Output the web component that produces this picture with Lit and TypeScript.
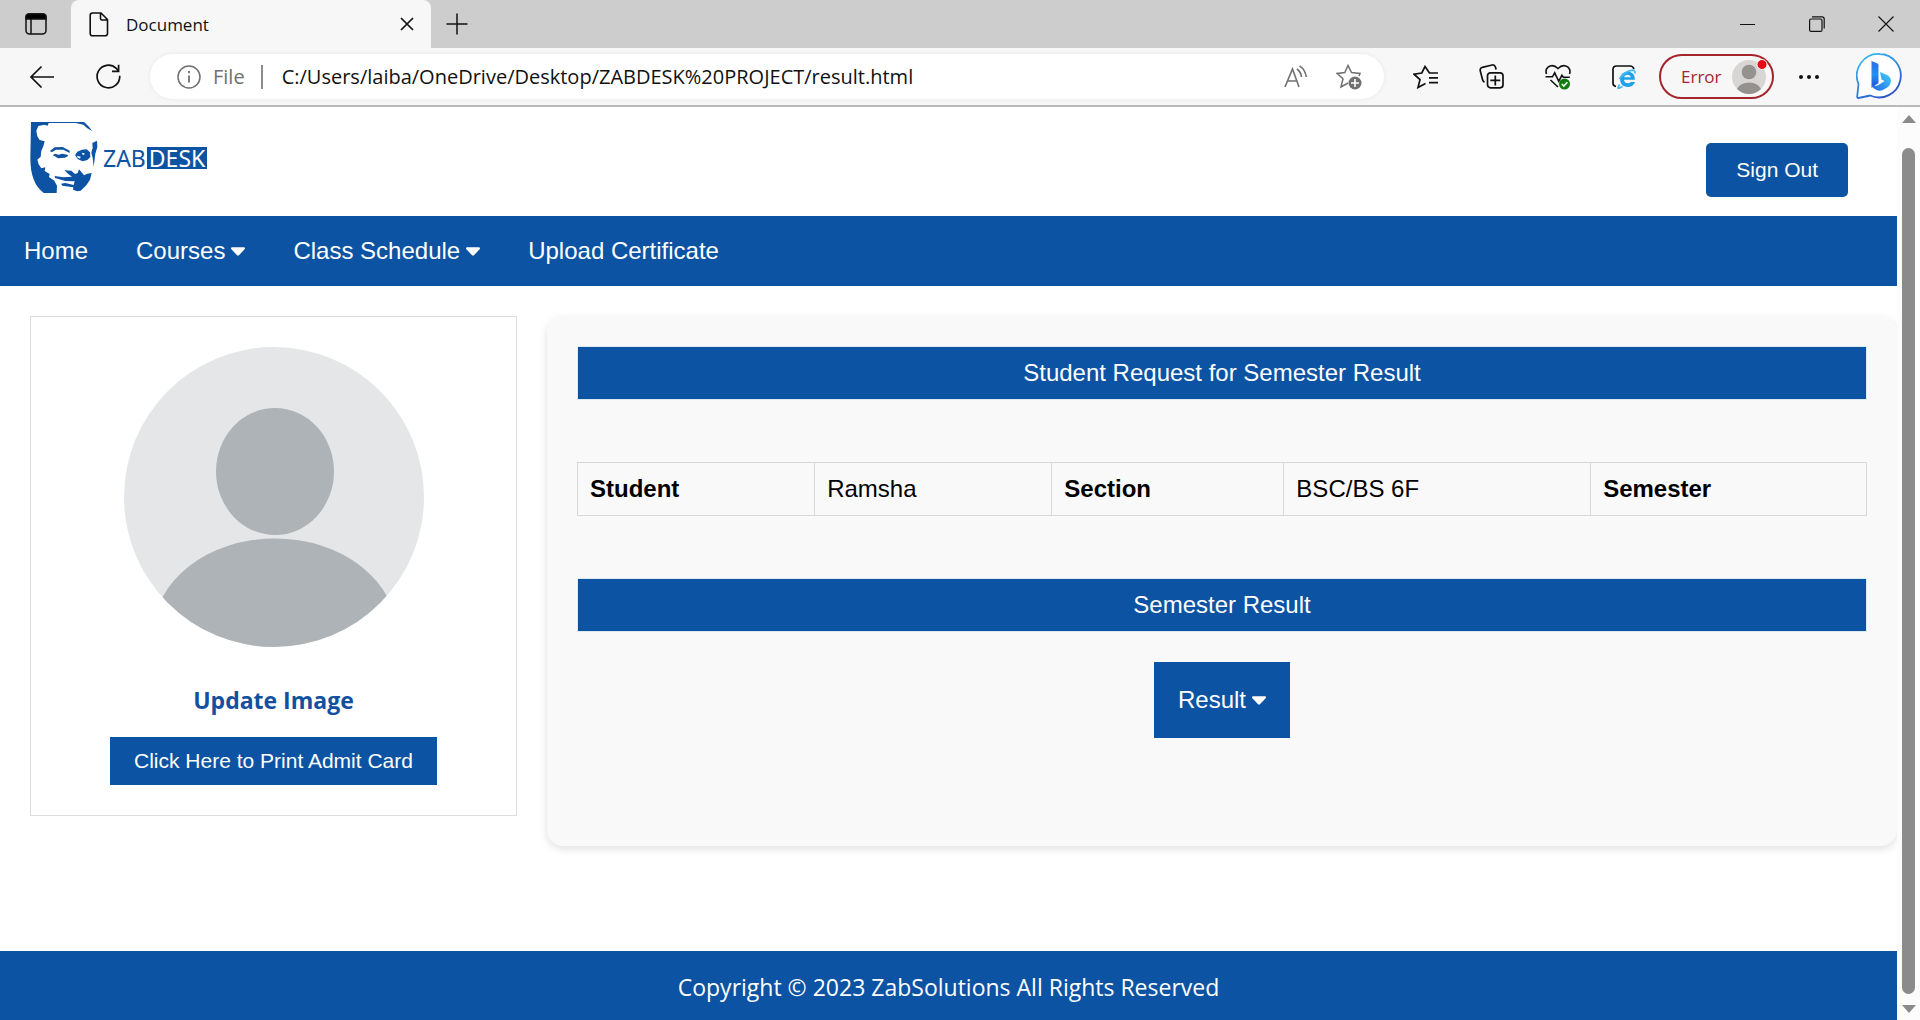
import { LitElement, html, css } from "lit";
import { customElement } from "lit/decorators.js";

const caret = html`<svg class="caret" viewBox="0 0 15 9" width="14" height="9" aria-hidden="true"><path d="M1.400 0h12.200c1.200 0 1.800 1.300 1 2.100L8.500 8.500a1.400 1.400 0 0 1-2 0L.4 2.100C-.4 1.300.200 0 1.400 0z" fill="currentColor"/></svg>`;

@customElement("browser-bar")
export class BrowserBar extends LitElement {
  static styles = css`
    :host { display: block; font-family: "Open Sans", "Noto Sans", sans-serif; color: #111; }
    * { box-sizing: border-box; }
    svg { display: block; flex: none; fill: none; stroke: currentColor; }
    svg.solid { fill: currentColor; stroke: none; }
    button { border: 0; padding: 0; background: none; color: inherit; font: inherit; display: flex; align-items: center; justify-content: center; }
    .tabs { display: flex; height: 48px; background: #cdcdcd; }
    .workspace { width: 71px; }
    .tab { display: flex; align-items: center; width: 360px; padding: 0 16px 0 18px; background: #f7f7f7; border-radius: 8px 8px 0 0; font-size: 17px; }
    .title { flex: 1; margin-left: 17px; }
    .add { width: 52px; }
    .spacer { flex: 1; }
    .win { width: 69px; }
    .tools { display: flex; align-items: center; height: 59px; padding: 0 18px 0 29px; background: #f7f7f7; border-bottom: 2px solid #b9b9b9; }
    .reload { margin-left: 41px; }
    .address { display: flex; align-items: center; flex: 1; height: 45px; margin: 0 29px; padding: 0 21px 0 27px; border-radius: 23px; background: #fff; box-shadow: 0 0 4px #e6e6e6; font-size: 20px; color: #707070; }
    .scheme { margin-left: 12px; }
    .bar { width: 2px; height: 24px; margin: 0 19px 0 16px; background: #8c8c8c; }
    .url { flex: 1; min-width: 0; border: 0; outline: 0; padding: 0; font: inherit; color: #111; background: none; }
    .star { margin-left: 28px; }
    .actions { display: flex; align-items: center; gap: 41px; }
    .profile { width: 115px; height: 45px; margin: 0 23px; padding: 0 4px 0 20px; border: 2px solid #a4262c; border-radius: 23px; color: #a4262c; font-size: 17px; justify-content: space-between; }
    .bing { margin-left: 35px; }
  `;

  render() {
    return html`
      <div class="tabs">
        <button class="workspace" aria-label="Tab actions">
          <svg width="22" height="22" viewBox="0 0 22 22" stroke-width="1.500"><rect x="1" y="1" width="20" height="20" rx="3.500"/><path d="M1 6V4q0-3 3-3h14q3 0 3 3v2z" fill="#000"/><path d="M6 6v15"/></svg>
        </button>
        <div class="tab">
          <svg width="20" height="25" viewBox="0 0 20 25" stroke-width="1.600"><path d="M3.500 1H12l6.500 6.500v14a2.300 2.300 0 0 1-2.300 2.300H3.500a2.300 2.300 0 0 1-2.300-2.300V3.300A2.300 2.300 0 0 1 3.500 1zM11.500 1v5.500a1.500 1.500 0 0 0 1.500 1.500h5.500"/></svg>
          <span class="title">Document</span>
          <button aria-label="Close tab"><svg width="16" height="14" viewBox="0 0 16 14" stroke-width="1.700"><path d="m2 1 12 12M14 1 2 13"/></svg></button>
        </div>
        <button class="add" aria-label="New tab"><svg width="22" height="22" viewBox="0 0 22 22" stroke-width="1.500"><path d="M11 0.500v21M0.500 11h21"/></svg></button>
        <span class="spacer"></span>
        <button class="win" aria-label="Minimize"><svg width="15" height="15" viewBox="0 0 15 15"><path d="M0 7.500h15"/></svg></button>
        <button class="win" aria-label="Restore"><svg width="16" height="16" viewBox="0 0 16 16" stroke-width="1.200"><rect x=".6" y="3" width="12.400" height="12.400" rx="1.500"/><path d="M3 .8h10a2.200 2.200 0 0 1 2.200 2.200v9.500"/></svg></button>
        <button class="win" aria-label="Close window"><svg width="16" height="16" viewBox="0 0 16 16" stroke-width="1.100"><path d="m.5.5 15 15m0-15-15 15"/></svg></button>
      </div>
      <div class="tools">
        <button aria-label="Back"><svg width="26" height="24" viewBox="0 0 26 24" stroke-width="1.700"><path d="M25 12H2M12.500 1.500 2 12l10.500 10.500"/></svg></button>
        <button class="reload" aria-label="Refresh"><svg width="25" height="25" viewBox="0 0 25 25" stroke-width="1.700"><path d="M23.700 11.800A11.300 11.300 0 1 1 20.200 4.300L22.500 7M22.600 .8V7.400H16"/></svg></button>
        <div class="address">
          <svg width="24" height="24" viewBox="0 0 24 24" stroke-width="1.500"><circle cx="12" cy="12" r="11"/><path d="M12 10.500v7M12 6v2.200" stroke-width="1.800"/></svg>
          <span class="scheme">File</span><span class="bar"></span>
          <input class="url" aria-label="Address" .value=${"C:/Users/laiba/OneDrive/Desktop/ZABDESK%20PROJECT/result.html"} />
          <button aria-label="Read aloud"><svg width="24" height="24" viewBox="0 0 24 24" stroke-width="1.600"><path d="m1 22 7.500-18L15 22M3.700 16h8.800M13 4q4 3 4.500 8M15.500 .8q6 4 6.800 11.200"/></svg></button>
          <button class="star" aria-label="Add to favorites"><svg width="27" height="26" viewBox="0 0 27 26" stroke-width="1.500"><path d="M23 12l1-2.500-8.500-1L12 1.500 8.800 8.500 1 9.500 7 14.800 5 23l7-4"/><circle cx="19" cy="19" r="6.500" fill="#707070" stroke="none"/><path d="M19 15v8M15 19h8" stroke="#fff" stroke-width="1.600"/></svg></button>
        </div>
        <div class="actions">
          <button aria-label="Favorites"><svg width="25" height="24" viewBox="0 0 25 24" stroke-width="1.700"><path d="M16.500 8 12 1.500 8.800 8 1 9.200 7 14.600 5 22.500l7.500-4M16 8h9M16 12.800h9M16 17.600h9"/></svg></button>
          <button aria-label="Collections"><svg width="25" height="25" viewBox="0 0 25 25" stroke-width="1.700"><rect x="8.500" y="8.800" width="15.500" height="15" rx="3"/><path d="M16.300 11.500v10M11.300 16.400h10M5.500 18.200Q4 17.500 3.600 15.800L1.200 6.600Q.8 4 3.300 3.300L13.200 1q2.500-.3 3.200 2l.7 2.500"/></svg></button>
          <button aria-label="Browser essentials"><svg width="26" height="26" viewBox="0 0 26 26" stroke-width="1.600"><path d="M1.500 10Q0 6 3 3.200 8-.5 13 4.500q5-5 10-1.300Q26 6 24.500 10M.5 12.800h7l2.200-4 4 8.500 3.200-6 1.400 2h6.500M5.500 16l7.500 7"/><circle cx="19.500" cy="20" r="5.500" fill="#107c10" stroke="none"/><path d="m16.800 20 2 2 3.600-3.800" stroke="#fff"/></svg></button>
          <button aria-label="Internet Explorer mode"><svg width="24" height="24" viewBox="0 0 24 24"><path d="M4 21.500Q1 21 1 18V4.500Q1 1 4.500 1H18q3 0 4 3" stroke-width="1.700"/><path d="M23 14.800H12q.5 3.500 3.800 3.500 2.200 0 3-1.300H23Q21.200 22 15.600 22 8 21.500 8 14q.5-7 7.500-7.500 7.500.5 7.500 8.300zM12 12.200h6.800Q18.500 9.800 15.500 9.700T12 12.200z" fill="#1fa2e8" fill-rule="evenodd" stroke="none"/><path d="M7.500 19.500Q4.500 24.500 7.500 23l3-1.500M7.500 14Q13.500 5.500 21 5.200q2.500.3 1.800 3.300" stroke="#45b8f2" stroke-width="1.700"/></svg></button>
        </div>
        <button class="profile" aria-label="Profile error">Error
          <svg class="solid" width="36" height="36" viewBox="0 0 36 36"><circle cx="17" cy="18" r="17" fill="#d8d6d4"/><circle cx="17" cy="13" r="7.300" fill="#94918f"/><path d="M5 30a12.500 9 0 0 1 24 0 17 17 0 0 1-24 0z" fill="#94918f"/><circle cx="30" cy="5.500" r="5" fill="#e60b14" stroke="#f7f7f7" stroke-width="1"/></svg>
        </button>
        <button aria-label="Settings and more"><svg class="solid" width="24" height="6" viewBox="0 0 24 6"><circle cx="4" cy="3" r="2"/><circle cx="12" cy="3" r="2"/><circle cx="20" cy="3" r="2"/></svg></button>
        <button class="bing" aria-label="Bing">
          <svg class="solid" width="46" height="47" viewBox="0 0 46 47">
            <defs><linearGradient id="ring" x1="0" y1="0" x2=".6" y2="1"><stop stop-color="#36c7f4"/><stop offset="1" stop-color="#2a55c8"/></linearGradient><linearGradient id="stem" x2="0" y2="1"><stop stop-color="#2c6be8"/><stop offset=".5" stop-color="#2391ee"/><stop offset="1" stop-color="#1f4fe0"/></linearGradient><linearGradient id="bowl" x1="1" y1="0" x2="0" y2="1"><stop stop-color="#42d3f6"/><stop offset="1" stop-color="#2362ea"/></linearGradient></defs>
            <path d="M23.500 1a21.700 21.700 0 1 1-9.300 41.500L2.500 45Q1 45 1.200 43.500L2.500 31A21.700 21.700 0 0 1 23.500 1z" fill="#fff" stroke="url(#ring)" stroke-width="1.800"/>
            <path d="m15.500 8 6 2.500q1 .5 1 2V30l-7 5z" fill="url(#stem)"/>
            <path d="m24 19 8 3.500q4 2.500 2.500 7.500-1 3.500-5 5.500-5 3.500-9 1.500-3.800-1.500-5-5 3 2 7 0l6-4-3-1.500z" fill="url(#bowl)"/>
          </svg>
        </button>
      </div>`;
  }
}

@customElement("app-root")
export class AppRoot extends LitElement {
  static styles = css`
    :host { display: flex; flex-direction: column; height: 100vh; background: #fff; font-family: "Liberation Sans", Arial, sans-serif; font-size: 24px; color: #000; --blue: #0c53a3; }
    * { box-sizing: border-box; }
    button { border: 0; margin: 0; font: inherit; color: #fff; background: var(--blue); }
    .view { display: flex; flex: 1; min-height: 0; }
    .page { display: flex; flex-direction: column; flex: 1; min-width: 0; overflow: hidden; }
    .head { display: flex; justify-content: space-between; align-items: flex-start; height: 109px; padding: 14px 49px 0 30px; flex: none; }
    .logo { display: flex; align-items: center; color: var(--blue); font: 400 23px/22px "Noto Sans", "Open Sans", sans-serif; text-decoration: none; }
    .logo svg { display: block; margin-right: 4px; }
    .desk { background: var(--blue); color: #fff; margin-left: 1px; padding: 0 2px; }
    .signout { margin-top: 22px; padding: 15px 30px; border-radius: 5px; font-size: 21px; line-height: 24px; }
    nav { display: flex; background: var(--blue); }
    nav a { display: flex; align-items: center; gap: 6px; padding: 0 24px; line-height: 70px; color: #fff; text-decoration: none; }
    .caret { display: block; }
    .main { display: flex; align-items: flex-start; gap: 30px; padding: 30px 0 105px 30px; }
    .card { display: flex; flex-direction: column; align-items: center; width: 487px; flex: none; padding: 30px; border: 1px solid #ddd; }
    .card h2 { margin: 36px 0 20px; font: 700 23px/34px "Open Sans", "Noto Sans", sans-serif; color: #1450a0; }
    .avatar { display: block; }
    .print { padding: 12px 24px; font-size: 21px; line-height: 24px; }
    .panel { flex: 1; min-width: 0; padding: 30px 30px 108px; background: #f9f9f9; border-radius: 16px; box-shadow: 0 3px 8px rgba(0, 0, 0, .12); text-align: center; }
    .bar { margin: 0; padding: 12px; border: 1px solid #dde9f6; background: var(--blue); background-clip: padding-box; color: #fff; font-size: 24px; font-weight: 400; line-height: 28px; }
    table { width: 100%; margin: 62px 0; border-collapse: collapse; table-layout: fixed; text-align: left; }
    th, td { padding: 12px; border: 1px solid #d8d8d8; line-height: 28px; }
    .c1 { width: 18.400%; }
    .c3 { width: 18%; }
    .c4 { width: 23.800%; }
    .result { display: inline-flex; align-items: center; gap: 6px; margin-top: 30px; padding: 24px; line-height: 28px; }
    footer { padding: 20px 0 17px; background: var(--blue); color: #fff; font: 400 23px/32px "Open Sans", "Noto Sans", sans-serif; text-align: center; }
    .scroll { display: flex; flex-direction: column; align-items: center; justify-content: space-between; width: 23px; padding: 8px 0 7px; background: #fcfcfc; }
    .thumb { flex: 1; width: 13px; margin: 25px 0 11px; border-radius: 7px; background: #8b8b8b; }
  `;

  render() {
    return html`
      <browser-bar></browser-bar>
      <div class="view">
        <div class="page">
          <header class="head">
            <a class="logo" href="#" aria-label="ZABDESK">
              <svg width="69" height="74" viewBox="90 48 207 222" fill="#0c53a3" aria-hidden="true">
                <path d="M93 51H252L264 62 277 78 262 70 250 59 228 54H146L143 62 133 59 115 63 109 77 112 94 119 105 134 109 130 124 124 137 122 155 112 164 116 178 124 190 136 187 134 198 149 207 147 216 163 227 171 242 170 264H131Q91 235 91 160z"/>
                <path d="M277 114 291 107 292 126 286 146 281 185 278 158 274 143 278 128z"/>
                <path d="M150 138 164 127 188 126 209 137 209 144 190 134 168 134 155 142zM158 151 165 146 176 149 186 146 202 149 205 153 194 158 174 160 165 154z"/>
                <path fill-rule="evenodd" d="M225 151 232 140 246 134 260 133 270 142 271 156 262 165 248 169 234 163zM231 152 242 155 240 161 232 157zM248 143 255 146 251 150 245 147z"/>
                <path d="M193 196 214 197 225 207 233 204 237 193 244 201 252 211 262 206 275 204 270 224 259 241 242 257 232 259 219 254 220 247 187 242 183 236 196 234 221 240 224 229 196 228 165 219 164 213 190 217 216 215 205 207z"/>
              </svg>
              <span>ZAB</span><span class="desk">DESK</span>
            </a>
            <button class="signout">Sign Out</button>
          </header>
          <nav>
            <a href="#">Home</a>
            <a href="#">Courses ${caret}</a>
            <a href="#">Class Schedule ${caret}</a>
            <a href="#">Upload Certificate</a>
          </nav>
          <main class="main">
            <section class="card">
              <svg class="avatar" width="300" height="300" viewBox="0 0 300 300" role="img" aria-label="Profile picture">
                <defs><clipPath id="round"><circle cx="150" cy="150" r="150"/></clipPath></defs>
                <g clip-path="url(#round)"><rect width="300" height="300" fill="#e4e6e8"/><ellipse cx="151" cy="124.500" rx="59" ry="63.500" fill="#aeb3b7"/><ellipse cx="151" cy="287" rx="122" ry="95.500" fill="#aeb3b7"/></g>
              </svg>
              <h2>Update Image</h2>
              <button class="print">Click Here to Print Admit Card</button>
            </section>
            <section class="panel">
              <h1 class="bar">Student Request for Semester Result</h1>
              <table>
                <colgroup><col class="c1" /><col class="c1" /><col class="c3" /><col class="c4" /><col /></colgroup>
                <tbody><tr><th scope="row">Student</th><td>Ramsha</td><th scope="row">Section</th><td>BSC/BS 6F</td><th scope="row">Semester</th></tr></tbody>
              </table>
              <h2 class="bar">Semester Result</h2>
              <button class="result">Result ${caret}</button>
            </section>
          </main>
          <footer>Copyright © 2023 ZabSolutions All Rights Reserved</footer>
        </div>
        <div class="scroll" aria-hidden="true">
          <svg width="14" height="8" viewBox="0 0 14 8"><path d="M7 0l7 8H0z" fill="#8b8b8b"/></svg>
          <span class="thumb"></span>
          <svg width="14" height="8" viewBox="0 0 14 8"><path d="M7 8l7-8H0z" fill="#8b8b8b"/></svg>
        </div>
      </div>`;
  }
}
